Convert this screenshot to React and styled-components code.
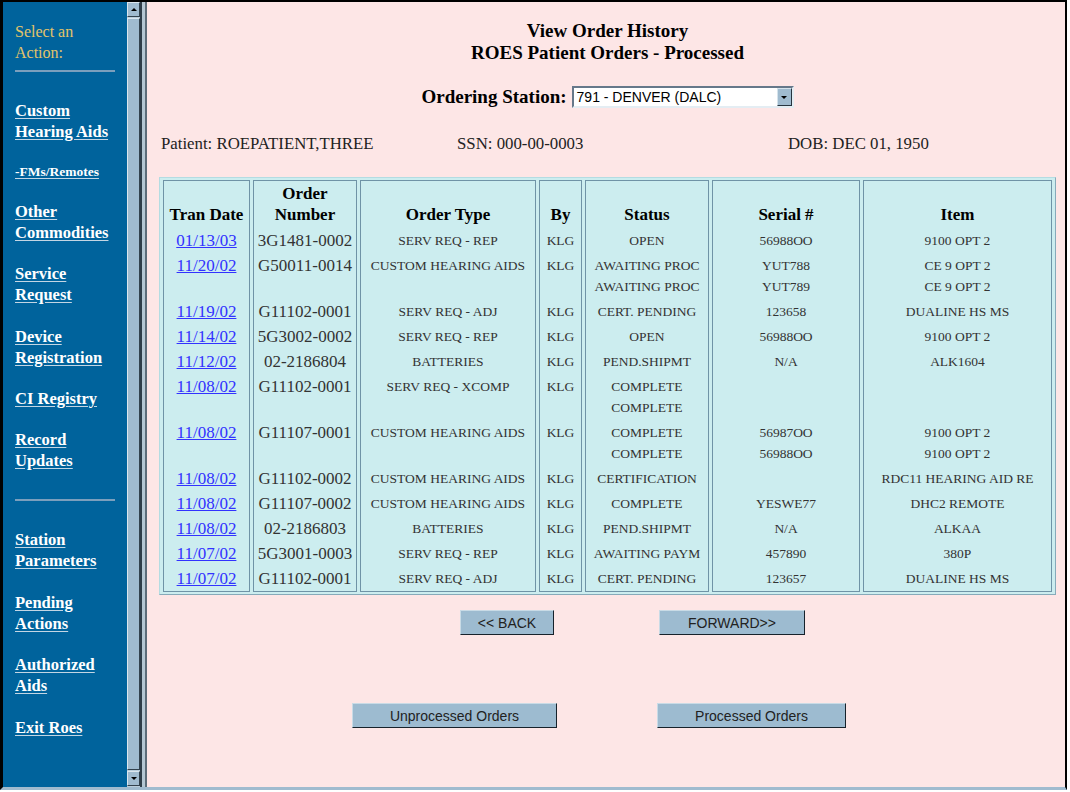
import React from 'react';
import styled, { createGlobalStyle } from 'styled-components';

const SERIF = `"Liberation Serif", "Times New Roman", serif`;
const SANS = `"Liberation Sans", Arial, sans-serif`;

const colors = {
  navy: "#00639c",
  gold: "#e3c46a",
  steel: "#a0bbcf",
  pink: "#fde6e6",
  cyan: "#ccedef",
  cellLine: "#6f93a6",
  link: "#3232ff",
};

const GlobalStyle = createGlobalStyle`
  html, body {
    margin: 0;
    padding: 0;
    background: #fff;
  }
  body {
    font-family: ${SERIF};
  }
`;

const Frame = styled.div`
  display: flex;
  width: 1067px;
  height: 790px;
  box-sizing: border-box;
  border-top: 2px solid #000;
  border-left: 3px solid #000;
  border-right: 2px solid #000;
  border-bottom: 3px solid ${colors.steel};
  overflow: hidden;
`;

const Sidebar = styled.nav`
  width: 124px;
  flex-shrink: 0;
  box-sizing: border-box;
  background: ${colors.navy};
  padding: 18.5px 0 0 12px;
`;

const SideTitle = styled.div`
  color: ${colors.gold};
  font-size: 16px;
  line-height: 21px;
`;

const SideRule = styled.div`
  width: 100px;
  height: 2px;
  background: #7b9fbd;
  margin: ${(p) => p.$top}px 0 28px;
`;

const NavSection = styled.div`
  display: flex;
  flex-direction: column;
  gap: 20.4px;
`;

const NavItem = styled.div`
  line-height: ${(p) => (p.$small ? 17 : 21)}px;
`;

const NavLink = styled.a`
  color: #fff;
  font-weight: bold;
  font-size: ${(p) => (p.$small ? 13.5 : 16.5)}px;
  text-decoration: underline;
  text-decoration-color: #c4d6e4;
  text-underline-offset: 2px;
`;

const Scrollbar = styled.div`
  width: 13px;
  flex-shrink: 0;
  background: #b9cddb;
  display: flex;
  flex-direction: column;
  gap: 1px;
  padding-bottom: 1px;
  box-sizing: border-box;
`;

const ScrollPart = styled.div`
  box-sizing: border-box;
  height: ${(p) => (p.$grow ? "auto" : "15px")};
  flex: ${(p) => (p.$grow ? 1 : "none")};
  background: ${colors.steel};
  border: 1px solid;
  border-color: #dbe6ee #33424d #33424d #dbe6ee;
  display: flex;
  align-items: center;
  justify-content: center;
`;

const Arrow = styled.span`
  width: 0;
  height: 0;
  border-left: 3px solid transparent;
  border-right: 3px solid transparent;
  ${(p) => (p.$up ? "border-bottom: 3px solid #000;" : "border-top: 3px solid #000;")}
`;

const Divider = styled.div`
  width: 7px;
  flex-shrink: 0;
  box-sizing: border-box;
  background: #b3c6d2;
  border-left: 2px solid #2e3d48;
  border-right: 2px solid #5b6c78;
`;

const Main = styled.main`
  flex: 1;
  background: ${colors.pink};
  padding: 18px 9px 0 12px;
  display: flex;
  flex-direction: column;
  color: #222;
`;

const Title = styled.h1`
  margin: 0;
  text-align: center;
  font-size: 19px;
  line-height: 22px;
  font-weight: bold;
  color: #000;
`;

const StationRow = styled.div`
  margin-top: 20px;
  height: 26px;
  display: flex;
  justify-content: center;
  align-items: center;
  gap: 5px;
`;

const StationLabel = styled.span`
  font-size: 19px;
  font-weight: bold;
  color: #000;
`;

const SelectBox = styled.div`
  width: 222px;
  height: 22px;
  box-sizing: border-box;
  border: 2px solid;
  border-color: #66788a #e4edf3 #e4edf3 #66788a;
  background: #fff;
  display: flex;
  align-items: center;
  padding-left: 3px;
  font-family: ${SANS};
  font-size: 14px;
  color: #000;
`;

const SelectButton = styled.span`
  margin-left: auto;
  width: 15px;
  height: 18px;
  box-sizing: border-box;
  background: ${colors.steel};
  border: 1px solid;
  border-color: #d5e3ec #27343e #27343e #d5e3ec;
  display: flex;
  align-items: center;
  justify-content: center;
`;

const PatientRow = styled.div`
  margin-top: 24px;
  display: grid;
  grid-template-columns: 296px 331px 1fr;
  padding-left: 2px;
  font-size: 16.8px;
  line-height: 20px;
`;

const OrdersTable = styled.table`
  margin-top: 23px;
  width: 897px;
  table-layout: fixed;
  border-collapse: separate;
  border-spacing: 3px 0;
  padding: 2px 0;
  background: ${colors.cyan};
  border: 1px solid;
  border-color: #b4dce2 #86aab9 #86aab9 #b4dce2;
`;

const HeadCell = styled.th`
  box-sizing: border-box;
  padding: 2px 1px 3px;
  vertical-align: bottom;
  text-align: center;
  font-size: 17px;
  line-height: 21px;
  font-weight: bold;
  color: #000;
  border-top: 1px solid ${colors.cellLine};
  border-left: 1px solid ${colors.cellLine};
  border-right: 1px solid ${colors.cellLine};
`;

const Cell = styled.td`
  box-sizing: border-box;
  padding: 2px 0;
  vertical-align: top;
  text-align: center;
  white-space: nowrap;
  overflow: hidden;
  font-size: ${(p) => (p.$big ? 17 : 13.5)}px;
  line-height: 21px;
  color: #333;
  border-left: 1px solid ${colors.cellLine};
  border-right: 1px solid ${colors.cellLine};
  border-bottom: ${(p) => (p.$last ? `1px solid ${colors.cellLine}` : "none")};
`;

const DateLink = styled.a`
  color: ${colors.link};
  text-decoration: underline;
`;

const ButtonRow = styled.div`
  margin-top: ${(p) => p.$top}px;
  display: flex;
  justify-content: center;
  gap: ${(p) => p.$gap}px;
  padding-left: ${(p) => p.$shiftL || 0}px;
  padding-right: ${(p) => p.$shiftR || 0}px;
`;

const Button = styled.button`
  width: ${(p) => p.$w}px;
  height: 25px;
  box-sizing: border-box;
  background: #9dbbd0;
  border: 1px solid;
  border-color: #c9dbe6 #17222b #17222b #c9dbe6;
  font-family: ${SANS};
  font-size: 14px;
  color: #222;
  padding: 0;
  cursor: pointer;
`;

const navTop = [
  { text: ["Custom", "Hearing Aids"] },
  { text: ["-FMs/Remotes"], small: true },
  { text: ["Other", "Commodities"] },
  { text: ["Service", "Request"] },
  { text: ["Device", "Registration"] },
  { text: ["CI Registry"] },
  { text: ["Record", "Updates"] },
];

const navBottom = [
  { text: ["Station", "Parameters"] },
  { text: ["Pending", "Actions"] },
  { text: ["Authorized", "Aids"] },
  { text: ["Exit Roes"] },
];

const columns = [
  { label: ["Tran Date"], width: 87 },
  { label: ["Order", "Number"], width: 104 },
  { label: ["Order Type"], width: 176 },
  { label: ["By"], width: 43 },
  { label: ["Status"], width: 124 },
  { label: ["Serial #"], width: 148 },
  { label: ["Item"] },
];

// date, order #, type, by, status[], serial[], item[]
const orders = [
  ["01/13/03", "3G1481-0002", "SERV REQ - REP", "KLG", ["OPEN"], ["56988OO"], ["9100 OPT 2"]],
  ["11/20/02", "G50011-0014", "CUSTOM HEARING AIDS", "KLG", ["AWAITING PROC", "AWAITING PROC"], ["YUT788", "YUT789"], ["CE 9 OPT 2", "CE 9 OPT 2"]],
  ["11/19/02", "G11102-0001", "SERV REQ - ADJ", "KLG", ["CERT. PENDING"], ["123658"], ["DUALINE HS MS"]],
  ["11/14/02", "5G3002-0002", "SERV REQ - REP", "KLG", ["OPEN"], ["56988OO"], ["9100 OPT 2"]],
  ["11/12/02", "02-2186804", "BATTERIES", "KLG", ["PEND.SHIPMT"], ["N/A"], ["ALK1604"]],
  ["11/08/02", "G11102-0001", "SERV REQ - XCOMP", "KLG", ["COMPLETE", "COMPLETE"], [""], [""]],
  ["11/08/02", "G11107-0001", "CUSTOM HEARING AIDS", "KLG", ["COMPLETE", "COMPLETE"], ["56987OO", "56988OO"], ["9100 OPT 2", "9100 OPT 2"]],
  ["11/08/02", "G11102-0002", "CUSTOM HEARING AIDS", "KLG", ["CERTIFICATION"], [""], ["RDC11 HEARING AID RE"]],
  ["11/08/02", "G11107-0002", "CUSTOM HEARING AIDS", "KLG", ["COMPLETE"], ["YESWE77"], ["DHC2 REMOTE"]],
  ["11/08/02", "02-2186803", "BATTERIES", "KLG", ["PEND.SHIPMT"], ["N/A"], ["ALKAA"]],
  ["11/07/02", "5G3001-0003", "SERV REQ - REP", "KLG", ["AWAITING PAYM"], ["457890"], ["380P"]],
  ["11/07/02", "G11102-0001", "SERV REQ - ADJ", "KLG", ["CERT. PENDING"], ["123657"], ["DUALINE HS MS"]],
];

const Lines = ({ lines }) =>
  lines.map((line, i) => (
    <React.Fragment key={i}>
      {i > 0 && <br />}
      {line || "\u00a0"}
    </React.Fragment>
  ));

const NavGroup = ({ items }) => (
  <NavSection>
    {items.map((item) => (
      <NavItem key={item.text.join(" ")} $small={item.small}>
        <NavLink href="#" $small={item.small}>
          <Lines lines={item.text} />
        </NavLink>
      </NavItem>
    ))}
  </NavSection>
);

export default function App() {
  return (
    <>
      <GlobalStyle />
      <Frame>
        <Sidebar>
          <SideTitle>
            Select an
            <br />
            Action:
          </SideTitle>
          <SideRule $top={7.5} />
          <NavGroup items={navTop} />
          <SideRule $top={28} />
          <NavGroup items={navBottom} />
        </Sidebar>
        <Scrollbar>
          <ScrollPart>
            <Arrow $up />
          </ScrollPart>
          <ScrollPart $grow />
          <ScrollPart>
            <Arrow />
          </ScrollPart>
        </Scrollbar>
        <Divider />
        <Main>
          <Title>
            View Order History
            <br />
            ROES Patient Orders - Processed
          </Title>
          <StationRow>
            <StationLabel>Ordering Station:</StationLabel>
            <SelectBox>
              791 - DENVER (DALC)
              <SelectButton>
                <Arrow />
              </SelectButton>
            </SelectBox>
          </StationRow>
          <PatientRow>
            <span>Patient: ROEPATIENT,THREE</span>
            <span>SSN: 000-00-0003</span>
            <span>DOB: DEC 01, 1950</span>
          </PatientRow>
          <OrdersTable>
            <colgroup>
              {columns.map((c) => (
                <col key={c.label.join()} style={c.width ? { width: c.width } : undefined} />
              ))}
            </colgroup>
            <thead>
              <tr>
                {columns.map((c) => (
                  <HeadCell key={c.label.join()}>
                    <Lines lines={c.label} />
                  </HeadCell>
                ))}
              </tr>
            </thead>
            <tbody>
              {orders.map((o, i) => {
                const last = i === orders.length - 1;
                return (
                  <tr key={i}>
                    <Cell $big $last={last}>
                      <DateLink href="#">{o[0]}</DateLink>
                    </Cell>
                    <Cell $big $last={last}>{o[1]}</Cell>
                    <Cell $last={last}>{o[2]}</Cell>
                    <Cell $last={last}>{o[3]}</Cell>
                    <Cell $last={last}><Lines lines={o[4]} /></Cell>
                    <Cell $last={last}><Lines lines={o[5]} /></Cell>
                    <Cell $last={last}><Lines lines={o[6]} /></Cell>
                  </tr>
                );
              })}
            </tbody>
          </OrdersTable>
          <ButtonRow $top={15} $gap={105} $shiftL={50}>
            <Button $w={94}>&lt;&lt; BACK</Button>
            <Button $w={146}>FORWARD&gt;&gt;</Button>
          </ButtonRow>
          <ButtonRow $top={68} $gap={100} $shiftR={17}>
            <Button $w={205}>Unprocessed Orders</Button>
            <Button $w={189}>Processed Orders</Button>
          </ButtonRow>
        </Main>
      </Frame>
    </>
  );
}
